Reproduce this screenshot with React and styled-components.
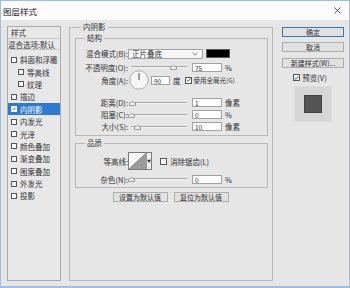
import React from 'react'
import styled, { createGlobalStyle } from 'styled-components'

const GlobalStyle = createGlobalStyle`
    html, body {
        margin: 0;
        padding: 0;
    }
    body {
        width: 350px;
        height: 288px;
        overflow: hidden;
        background: #e6e6e6;
        font-family: "Noto Sans CJK SC", "Liberation Sans", sans-serif;
        font-size: 7.5px;
        color: #333;
    }
    * {
        box-sizing: border-box;
    }
`

const Window = styled.div`
    width: 350px;
    height: 288px;
    display: flex;
    flex-direction: column;
    border: 1px solid #9fbfe2;
    border-bottom-width: 2px;
    background: #e6e6e6;
`

const TitleBar = styled.div`
    height: 19px;
    flex: none;
    display: flex;
    align-items: center;
    justify-content: space-between;
    padding: 0 8px 0 2px;
    background: #fbfbfb;
    font-size: 8.5px;
    color: #1a1a1a;
`

const Body = styled.div`
    flex: 1;
    display: flex;
    padding: 2px 5px 5px 6px;
    min-height: 0;
`

const Sidebar = styled.div`
    width: 54px;
    margin-top: 4px;
    border: 1px solid #ababab;
    background: #e8e8e8;
    display: flex;
    flex-direction: column;
`

const SideHead = styled.div`
    height: 11.5px;
    line-height: 11px;
    padding-left: ${p => p.$pl}px;
    border-bottom: 1px solid #c6c6c6;
    white-space: nowrap;
`

const SideItem = styled.div`
    height: 12.4px;
    display: flex;
    align-items: center;
    gap: 3px;
    padding-left: ${p => (p.$sub ? 10 : 3)}px;
    margin-top: ${p => (p.$first ? 3.5 : 0)}px;
    background: ${p => (p.$active ? '#2d7ad2' : 'transparent')};
    color: ${p => (p.$active ? '#fff' : '#333')};
    white-space: nowrap;
`

const Box = styled.span`
    width: ${p => p.$s}px;
    height: ${p => p.$s}px;
    flex: none;
    display: inline-flex;
    align-items: center;
    justify-content: center;
    border: 1px solid ${p => (p.$light ? '#fff' : '#555')};
    background: #fff;
    margin-left: ${p => p.$ml || 0}px;
`

const Main = styled.fieldset`
    width: 204px;
    margin: 0 0 0 8px;
    padding: 0 4px 0 5px;
    border: 1px solid #b8b8b8;
    min-width: 0;
    display: flex;
    flex-direction: column;
`

const Legend = styled.legend`
    margin-left: ${p => p.$ml}px;
    padding: 0 2px;
    font-size: 7.5px;
    line-height: 10px;
`

const Group = styled.fieldset`
    margin: ${p => p.$mt}px 0 0 0;
    padding: ${p => p.$pt}px 0 ${p => p.$pb}px 0;
    border: 1px solid #b8b8b8;
    min-width: 0;
`

const Row = styled.div`
    height: ${p => p.$h}px;
    margin-top: ${p => p.$mt || 0}px;
    display: flex;
    align-items: center;
    white-space: nowrap;
`

const Label = styled.span`
    width: 52px;
    flex: none;
    text-align: right;
`

const Select = styled.div`
    width: 75px;
    height: 10px;
    display: flex;
    align-items: center;
    justify-content: space-between;
    padding: 0 4px 0 3px;
    border: 1px solid #a2a2a2;
    background: #f7f7f7;
`

const Swatch = styled.div`
    width: 24px;
    height: 9px;
    margin-left: 3px;
    background: #000;
    border: 1px solid #5a5a5a;
`

const Slider = styled.div`
    position: relative;
    width: 56px;
    height: 8px;
    margin-left: 3px;
    display: flex;
    align-items: center;
`

const Track = styled.div`
    width: 100%;
    height: 2px;
    background: #a5a5a5;
    border-bottom: 1px solid #f4f4f4;
`

const Thumb = styled.svg`
    position: absolute;
    top: 2px;
    margin-left: -3px;
`

const Input = styled.div`
    width: ${p => p.$w}px;
    height: 9px;
    margin-left: ${p => p.$ml}px;
    padding-left: 2px;
    line-height: 8px;
    font-size: 6.5px;
    border: 1px solid #a2a2a2;
    background: #fff;
`

const Unit = styled.span`
    margin-left: ${p => p.$ml || 3}px;
    font-size: ${p => p.$fs || 7.5}px;
`

const Dial = styled.svg`
    margin-left: 1px;
    flex: none;
`

const Contour = styled.div`
    width: 24px;
    height: 18px;
    display: flex;
    border: 1px solid #7a7a7a;
    background: #fff;
`

const ContourArrow = styled.div`
    width: 5px;
    border-left: 1px solid #9a9a9a;
    background: #f0f0f0;
    display: flex;
    align-items: center;
    justify-content: center;
    font-size: 4px;
`

const Buttons = styled.div`
    display: flex;
    justify-content: center;
    gap: 6px;
    margin-top: 4px;
    padding-right: 2px;
`

const Button = styled.div`
    width: ${p => p.$w}px;
    height: 10px;
    display: flex;
    align-items: center;
    justify-content: center;
    border: 1px solid ${p => (p.$primary ? '#3a78b6' : '#adadad')};
    background: #e1e1e1;
    font-size: 7px;
    margin-top: ${p => p.$mt || 0}px;
    white-space: nowrap;
`

const Side = styled.div`
    width: 62px;
    margin: 5px 0 0 9px;
    display: flex;
    flex-direction: column;
    align-items: center;
`

const PreviewCheck = styled.div`
    margin-top: 5px;
    height: 9px;
    display: flex;
    align-items: center;
    gap: 2px;
    padding-right: 6px;
`

const Preview = styled.div`
    width: 38px;
    height: 36px;
    margin-top: 4px;
    display: flex;
    align-items: center;
    justify-content: center;
    background: #d6d6d6;
    border: 1px solid #dcdcdc;
`

const PreviewSquare = styled.div`
    width: 18px;
    height: 18px;
    background: #545454;
    border: 1px solid #444;
`

const Check = ({ color = '#222' }) => (
    <svg width="6" height="6" viewBox="0 0 6 6">
        <path d="M0.8 3 L2.4 4.6 L5.3 1" fill="none" stroke={color} strokeWidth="0.9" />
    </svg>
)

const CheckBox = ({ checked, size = 6, ml, light }) => (
    <Box $s={size} $ml={ml} $light={light}>
        {checked && <Check />}
    </Box>
)

const SliderCtl = ({ value }) => (
    <Slider>
        <Track />
        <Thumb width="7" height="5" viewBox="0 0 7 5" style={{ left: `${value}%` }}>
            <path d="M0.5 4.5 V2 L3.5 0.5 L6.5 2 V4.5 Z" fill="#efefef" stroke="#8a8a8a" strokeWidth="0.8" />
        </Thumb>
    </Slider>
)

const sideItems = [
    { label: '斜面和浮雕' },
    { label: '等高线', sub: true },
    { label: '纹理', sub: true },
    { label: '描边' },
    { label: '内阴影', active: true, checked: true },
    { label: '内发光' },
    { label: '光泽' },
    { label: '颜色叠加' },
    { label: '渐变叠加' },
    { label: '图案叠加' },
    { label: '外发光' },
    { label: '投影' },
]

const SliderRow = ({ label, value, input, unit, mt, h = 11 }) => (
    <Row $h={h} $mt={mt}>
        <Label>{label}</Label>
        <SliderCtl value={value} />
        <Input $w={30} $ml={5}>{input}</Input>
        <Unit>{unit}</Unit>
    </Row>
)

const App = () => {
    return (
        <>
            <GlobalStyle />
            <Window>
                <TitleBar>
                    <span>图层样式</span>
                    <svg width="7" height="7" viewBox="0 0 7 7">
                        <path d="M0.5 0.5 L6.5 6.5 M6.5 0.5 L0.5 6.5" stroke="#333" strokeWidth="0.8" />
                    </svg>
                </TitleBar>
                <Body>
                    <Sidebar>
                        <SideHead $pl={3}>样式</SideHead>
                        <SideHead $pl={0}>混合选项:默认</SideHead>
                        {sideItems.map((it, i) => (
                            <SideItem key={it.label} $sub={it.sub} $active={it.active} $first={i === 0}>
                                <CheckBox checked={it.checked} light={it.active} />
                                <span>{it.label}</span>
                            </SideItem>
                        ))}
                    </Sidebar>

                    <Main>
                        <Legend $ml={6}>内阴影</Legend>
                        <Group $mt={1} $pt={4} $pb={3}>
                            <Legend $ml={9}>结构</Legend>
                            <Row $h={13}>
                                <Label>混合模式(B):</Label>
                                <Select>
                                    <span>正片叠底</span>
                                    <svg width="6" height="4" viewBox="0 0 6 4">
                                        <path d="M0.5 0.8 L3 3.2 L5.5 0.8" fill="none" stroke="#666" strokeWidth="0.8" />
                                    </svg>
                                </Select>
                                <Swatch />
                            </Row>
                            <SliderRow label="不透明度(O):" value={75} input="75" unit="%" h={14} />
                            <Row $h={12}>
                                <Label>角度(A):</Label>
                                <Dial width="20" height="20" viewBox="0 0 20 20">
                                    <circle cx="10" cy="10" r="9.2" fill="#f6f6f6" stroke="#9a9a9a" strokeWidth="0.8" />
                                    <path d="M10 10 V3" stroke="#333" strokeWidth="0.9" />
                                </Dial>
                                <Input $w={19} $ml={2}>90</Input>
                                <Unit>度</Unit>
                                <CheckBox checked size={7} ml={4} />
                                <Unit $ml={2} $fs={6.5}>使用全局光(G)</Unit>
                            </Row>
                            <SliderRow label="距离(D):" value={1} input="1" unit="像素" mt={11} />
                            <SliderRow label="阻塞(C):" value={0} input="0" unit="%" h={13} />
                            <SliderRow label="大小(S):" value={10} input="10" unit="像素" />
                        </Group>
                        <Group $mt={2} $pt={4} $pb={3}>
                            <Legend $ml={9}>品质</Legend>
                            <Row $h={18}>
                                <Label>等高线:</Label>
                                <Contour>
                                    <svg width="17" height="16" viewBox="0 0 17 16">
                                        <path d="M0 16 L17 0 V16 Z" fill="#9c9c9c" />
                                        <path d="M0 16 L17 0" stroke="#555" strokeWidth="0.6" />
                                    </svg>
                                    <ContourArrow>▼</ContourArrow>
                                </Contour>
                                <CheckBox size={7} ml={8} />
                                <Unit $ml={3}>消除锯齿(L)</Unit>
                            </Row>
                            <SliderRow label="杂色(N):" value={0} input="0" unit="%" mt={4} h={10} />
                        </Group>
                        <Buttons>
                            <Button $w={55}>设置为默认值</Button>
                            <Button $w={55}>复位为默认值</Button>
                        </Buttons>
                    </Main>

                    <Side>
                        <Button $w={62} $primary>确定</Button>
                        <Button $w={62} $mt={5}>取消</Button>
                        <Button $w={62} $mt={6}>新建样式(W)...</Button>
                        <PreviewCheck>
                            <CheckBox checked size={7} />
                            <span>预览(V)</span>
                        </PreviewCheck>
                        <Preview>
                            <PreviewSquare />
                        </Preview>
                    </Side>
                </Body>
            </Window>
        </>
    )
}

export default App
